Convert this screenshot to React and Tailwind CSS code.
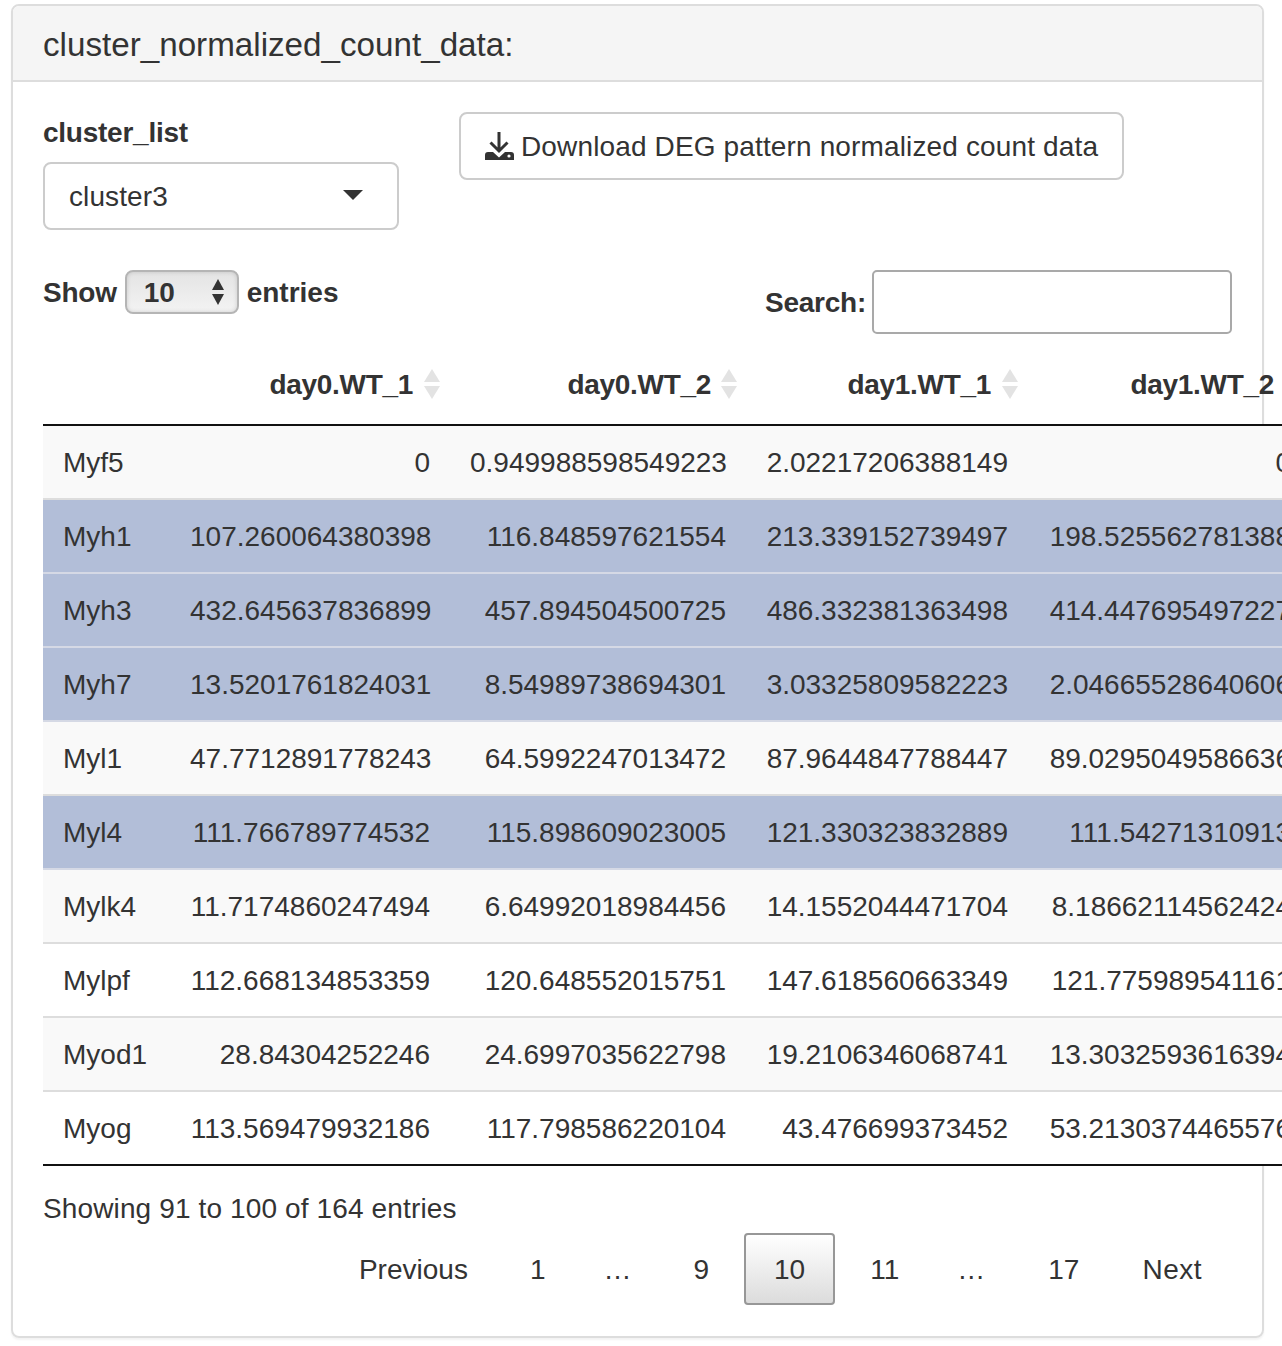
import React from "react";

const rows = [
  ["Myf5", "0", "0.949988598549223", "2.02217206388149", "0", "bg-[#f9f9f9]"],
  ["Myh1", "107.260064380398", "116.848597621554", "213.339152739497", "198.525562781388", "sel"],
  ["Myh3", "432.645637836899", "457.894504500725", "486.332381363498", "414.447695497227", "sel"],
  ["Myh7", "13.5201761824031", "8.54989738694301", "3.03325809582223", "2.04665528640606", "sel"],
  ["Myl1", "47.7712891778243", "64.5992247013472", "87.9644847788447", "89.0295049586636", "bg-[#f9f9f9]"],
  ["Myl4", "111.766789774532", "115.898609023005", "121.330323832889", "111.54271310913", "sel"],
  ["Mylk4", "11.7174860247494", "6.64992018984456", "14.1552044471704", "8.18662114562424", "bg-[#f9f9f9]"],
  ["Mylpf", "112.668134853359", "120.648552015751", "147.618560663349", "121.775989541161", "bg-white"],
  ["Myod1", "28.84304252246", "24.6997035622798", "19.2106346068741", "13.3032593616394", "bg-[#f9f9f9]"],
  ["Myog", "113.569479932186", "117.798586220104", "43.476699373452", "53.2130374465576", "bg-white"],
];

function SortIcon({ className }) {
  return (
    <svg width="18" height="30" viewBox="0 0 18 30" className={"absolute top-[22px] " + className} aria-hidden="true">
      <path d="M9 0L17 13H1Z" fill="#e3e3e3" />
      <path d="M9 30L17 17H1Z" fill="#e3e3e3" />
    </svg>
  );
}

function DownloadIcon() {
  return (
    <svg width="30" height="30" viewBox="0 0 30 30" className="mr-[6px] shrink-0" aria-hidden="true">
      <path d="M14 1V19M5.5 11.5L14 20L22.5 11.5" fill="none" stroke="#333333" strokeWidth="3" />
      <path d="M3 21H8L14 26.5L20 21H26Q29 21 29 24V29H0V24Q0 21 3 21Z" fill="#333333" />
      <circle cx="24" cy="25" r="1.6" fill="#ffffff" />
    </svg>
  );
}

function Head({ children, pad = "pr-[37px]", icon = "right-[9px]" }) {
  return (
    <th className={pad + " relative h-[78px] pb-[2px] pl-5 text-right font-bold tracking-[-0.3px] border-b-2 border-[#111111]"}>
      {children}
      <SortIcon className={icon} />
    </th>
  );
}

function PageLink({ children, active, className = "ml-[4px]" }) {
  return (
    <a
      className={
        className +
        (active
          ? " flex h-[72px] items-center rounded-[4px] border-2 border-[#979797] bg-gradient-to-b from-white to-[#dcdcdc] px-7 pt-[1px] text-[#333333]"
          : " flex h-[72px] items-center border-2 border-transparent px-7 pt-[1px] text-[#333333]")
      }
    >
      {children}
    </a>
  );
}

export default function App() {
  return (
    <div className="h-[1346px] w-[1282px] overflow-hidden bg-white pt-[4px] pl-[11px] font-['Liberation_Sans',Arial,sans-serif] text-[28px] leading-10 text-[#333333]">
      <div className="h-[1334px] w-[1253px] rounded-[8px] border-2 border-[#dddddd] shadow-[0_2px_2px_rgba(0,0,0,0.05)]">
        <div className="flex h-[76px] items-center rounded-t-[6px] border-b-2 border-[#dddddd] bg-[#f5f5f5] px-[30px] pt-[3px] text-[33.2px]">
          cluster_normalized_count_data:
        </div>
        <div className="pt-[30px] pl-[30px]">
          <div className="flex">
            <div className="w-[356px]">
              <div className="mt-[1px] mb-[9px] leading-10 font-bold tracking-[-0.25px]">cluster_list</div>
              <div className="relative flex h-[68px] items-center rounded-[8px] border-2 border-[#cccccc] pt-[2px] pl-6 tracking-[0.1px]">
                cluster3
                <span className="absolute top-[26px] right-[34px] h-0 w-0 border-x-[10px] border-t-[10px] border-x-transparent border-t-[#333333]" />
              </div>
            </div>
            <div className="ml-[60px] flex h-[68px] w-[665px] items-center rounded-[8px] border-2 border-[#cccccc] pl-6">
              <DownloadIcon />
              <span className="pt-[1px] tracking-[0.14px]">Download DEG pattern normalized count data</span>
            </div>
          </div>

          <div className="mt-[40px] flex h-[64px] w-[1189px] items-start justify-between">
            <div className="flex h-[44px] items-center font-bold">
              <span className="pt-[2px] tracking-[-0.25px]">Show</span>
              <div className="relative mx-2 flex h-[44px] w-[114px] items-center rounded-[8px] border-2 border-[#b5b5b5] bg-gradient-to-b from-[#e4e4e4] to-[#f3f3f3] pt-[2px] pl-[17px] font-bold shadow-[inset_0_0_4px_rgba(0,0,0,0.15)]">
                10
                <svg width="14" height="26" viewBox="0 0 14 26" className="absolute top-[7px] right-[12px]" aria-hidden="true">
                  <path d="M7 0L13 11H1Z" fill="#333333" />
                  <path d="M7 26L13 15H1Z" fill="#333333" />
                </svg>
              </div>
              <span className="pt-[2px]">entries</span>
            </div>
            <div className="flex items-center font-bold">
              <span className="mr-[6px] pt-[1px] tracking-[-0.25px]">Search:</span>
              <input className="h-[64px] w-[360px] rounded-[5px] border-2 border-[#a9a9a9] bg-white outline-none" aria-label="Search" />
            </div>
          </div>

          <table className="mt-[13px] w-[1268px] table-fixed border-collapse">
            <colgroup>
              <col className="w-[127px]" />
              <col className="w-[280px]" />
              <col className="w-[296px]" />
              <col className="w-[282px]" />
              <col className="w-[283px]" />
            </colgroup>
            <thead>
              <tr>
                <th className="border-b-2 border-[#111111]" />
                <Head>day0.WT_1</Head>
                <Head pad="pr-[35px]" icon="right-[8px]">day0.WT_2</Head>
                <Head>day1.WT_1</Head>
                <Head>day1.WT_2</Head>
              </tr>
            </thead>
            <tbody>
              {rows.map((r, i) => {
                const selected = r[5] === "sel";
                return (
                  <tr
                    key={r[0]}
                    className={
                      (selected ? "bg-[#b2bed8]" : r[5]) +
                      (i === rows.length - 1 ? " border-b-2 border-[#111111]" : selected ? " border-b-2 border-[#d5d9e5]" : " border-b-2 border-[#dddddd]")
                    }
                  >
                    <td className="h-[74px] px-5 pt-[2px] whitespace-nowrap">{r[0]}</td>
                    {r.slice(1, 5).map((v, j) => (
                      <td key={j} className="h-[74px] px-5 pt-[2px] text-right whitespace-nowrap">
                        {v}
                      </td>
                    ))}
                  </tr>
                );
              })}
            </tbody>
          </table>

          <div className="mt-[23px] leading-10 tracking-[0.13px]">Showing 91 to 100 of 164 entries</div>
          <div className="mt-[4px] flex w-[1189px] justify-end">
            <PageLink>Previous</PageLink>
            <PageLink className="ml-[2px]">1</PageLink>
            <span className="flex h-[72px] items-center px-7 pt-[1px]">…</span>
            <PageLink className="ml-[4px] mr-[1px]">9</PageLink>
            <PageLink active>10</PageLink>
            <PageLink className="ml-[5px]">11</PageLink>
            <span className="flex h-[72px] items-center pr-[29px] pl-7 pt-[1px]">…</span>
            <PageLink>17</PageLink>
            <PageLink className="ml-[3px] tracking-[0.5px]">Next</PageLink>
          </div>
        </div>
      </div>
    </div>
  );
}
